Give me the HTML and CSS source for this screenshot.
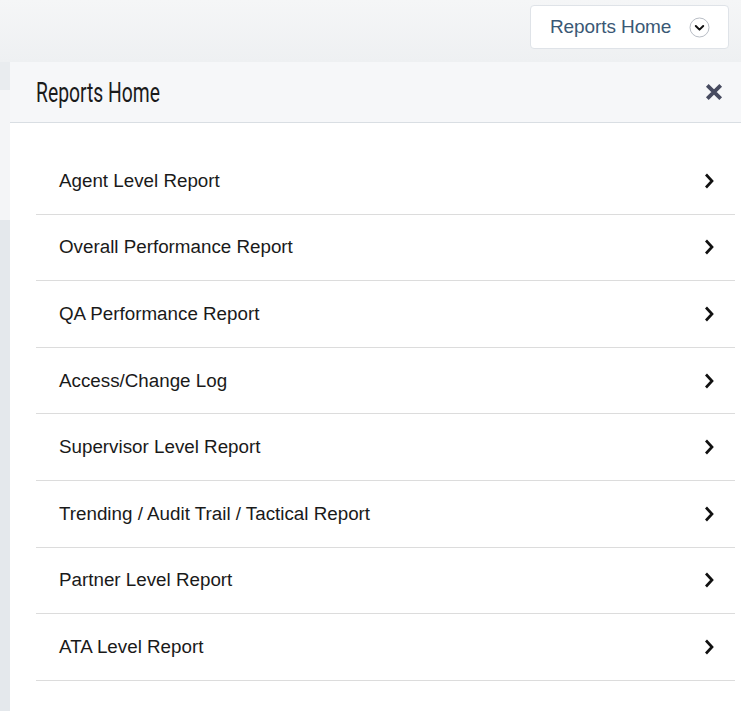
FILE: index.html
```html
<!DOCTYPE html>
<html>
<head>
<meta charset="utf-8">
<link rel="stylesheet" href="styles.css">
</head>
<body>
<div class="page">
  <header class="topbar">
    <button class="menu-btn">
      <span class="menu-btn-label">Reports Home</span>
      <svg class="circle-chev" width="21" height="21" viewBox="0 0 21 21">
        <circle cx="10.5" cy="10.5" r="9.5" fill="#fff" stroke="#b9bec6" stroke-width="1"/>
        <polyline points="6.8,9 10.5,12.6 14.2,9" fill="none" stroke="#111" stroke-width="2" stroke-linecap="round" stroke-linejoin="round"/>
      </svg>
    </button>
  </header>
  <div class="main">
    <aside class="side">
      <div class="side-a"></div>
      <div class="side-b"></div>
      <div class="side-c"></div>
    </aside>
    <section class="panel">
      <div class="panel-head">
        <h2 class="panel-title">Reports Home</h2>
        <svg class="close" width="18" height="18" viewBox="0 0 18 18">
          <path d="M2.3 2.3 L15.7 15.7 M15.7 2.3 L2.3 15.7" stroke="#474b60" stroke-width="3.8" stroke-linecap="butt"/>
        </svg>
      </div>
      <ul class="list">
        <li class="item"><span>Agent Level Report</span><svg class="chev" width="10" height="16" viewBox="0 0 10 16"><polyline points="2,1.5 8,8 2,14.5" fill="none" stroke="#111" stroke-width="2.7"/></svg></li>
        <li class="item"><span>Overall Performance Report</span><svg class="chev" width="10" height="16" viewBox="0 0 10 16"><polyline points="2,1.5 8,8 2,14.5" fill="none" stroke="#111" stroke-width="2.7"/></svg></li>
        <li class="item"><span>QA Performance Report</span><svg class="chev" width="10" height="16" viewBox="0 0 10 16"><polyline points="2,1.5 8,8 2,14.5" fill="none" stroke="#111" stroke-width="2.7"/></svg></li>
        <li class="item"><span>Access/Change Log</span><svg class="chev" width="10" height="16" viewBox="0 0 10 16"><polyline points="2,1.5 8,8 2,14.5" fill="none" stroke="#111" stroke-width="2.7"/></svg></li>
        <li class="item"><span>Supervisor Level Report</span><svg class="chev" width="10" height="16" viewBox="0 0 10 16"><polyline points="2,1.5 8,8 2,14.5" fill="none" stroke="#111" stroke-width="2.7"/></svg></li>
        <li class="item"><span>Trending / Audit Trail / Tactical Report</span><svg class="chev" width="10" height="16" viewBox="0 0 10 16"><polyline points="2,1.5 8,8 2,14.5" fill="none" stroke="#111" stroke-width="2.7"/></svg></li>
        <li class="item"><span>Partner Level Report</span><svg class="chev" width="10" height="16" viewBox="0 0 10 16"><polyline points="2,1.5 8,8 2,14.5" fill="none" stroke="#111" stroke-width="2.7"/></svg></li>
        <li class="item"><span>ATA Level Report</span><svg class="chev" width="10" height="16" viewBox="0 0 10 16"><polyline points="2,1.5 8,8 2,14.5" fill="none" stroke="#111" stroke-width="2.7"/></svg></li>
      </ul>
    </section>
  </div>
</div>
</body>
</html>
```
FILE: styles.css
```css
* { box-sizing: border-box; }
html, body { margin: 0; padding: 0; }
body {
  font-family: "Liberation Sans", Arial, sans-serif;
  background: #e6e9ed;
  width: 741px;
  height: 711px;
  overflow: hidden;
}
.page { display: flex; flex-direction: column; height: 711px; }
.topbar {
  height: 62px;
  background: linear-gradient(#f5f6f7, #eef0f2);
  display: flex;
  justify-content: flex-end;
  align-items: flex-start;
  padding: 5px 12px 0 0;
}
.menu-btn {
  width: 199px;
  height: 44px;
  background: #fff;
  border: 1px solid #dfe3e8;
  border-radius: 4px;
  display: flex;
  align-items: center;
  padding: 0 0 0 19px;
  font-family: "Liberation Sans", Arial, sans-serif;
  cursor: pointer;
}
.menu-btn-label {
  font-size: 19px;
  color: #3a5875;
  letter-spacing: -0.1px;
}
.circle-chev { margin-left: 18px; }
.main { flex: 1; display: flex; }
.side { width: 10px; display: flex; flex-direction: column; }
.side-a { height: 28px; background: #e9ecef; }
.side-b { height: 130px; background: #f4f5f7; }
.side-c { flex: 1; background: #e4e8ec; }
.panel { flex: 1; background: #fff; display: flex; flex-direction: column; }
.panel-head {
  height: 61px;
  background: #f6f7f9;
  border-bottom: 1px solid #d9dee3;
  display: flex;
  align-items: center;
  justify-content: space-between;
  padding: 0 18px 0 26px;
}
.panel-title {
  margin: 0;
  font-family: Roboto, "Liberation Sans", sans-serif;
  font-weight: normal;
  font-size: 27px;
  line-height: 1;
  color: #1b1b1b;
  display: inline-block;
  transform: scaleX(0.715);
  transform-origin: left center;
  position: relative;
  top: 1px;
}
.list {
  list-style: none;
  margin: 0;
  padding: 25px 6px 0 26px;
}
.item {
  height: 66.6px;
  border-bottom: 1px solid #dcdcdc;
  display: flex;
  align-items: center;
  justify-content: space-between;
  padding: 0 21px 0 23px;
  font-size: 18.8px;
  color: #1a1a1a;
}
.chev { display: block; }
```
